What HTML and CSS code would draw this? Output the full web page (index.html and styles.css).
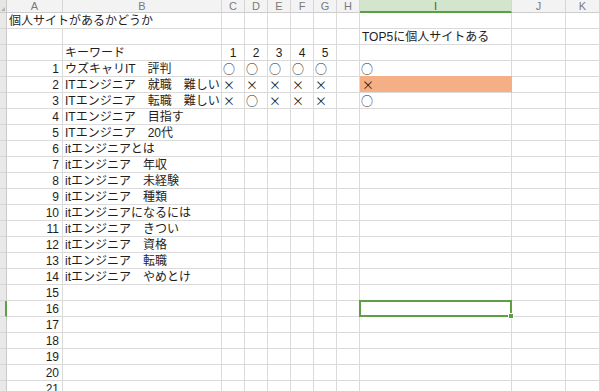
FILE: index.html
```html
<!DOCTYPE html>
<html lang="ja">
  <head>
    <meta charset="UTF-8">
    <meta name="viewport" content="width=device-width, initial-scale=1.0">
    <title>個人サイトがあるかどうか</title>
    <link rel="stylesheet" href="styles.css">
  </head>
  <body>
    <div class="sheet">
      <!-- column headers -->
      <div class="corner"></div>
      <div class="col">A</div><div class="col">B</div><div class="col">C</div><div class="col">D</div><div class="col">E</div><div class="col">F</div><div class="col">G</div><div class="col">H</div><div class="col sel">I</div><div class="col">J</div><div class="col">K</div>

      <!-- row 1 -->
      <div class="rh"></div>
      <div class="title">個人サイトがあるかどうか</div>
      <div></div><div></div><div></div><div></div><div></div><div></div><div></div><div></div><div></div>

      <!-- row 2 -->
      <div class="rh"></div>
      <div></div><div></div>
      <div></div><div></div><div></div><div></div><div></div><div></div>
      <div>TOP5に個人サイトある</div><div></div><div></div>

      <!-- row 3 -->
      <div class="rh"></div>
      <div></div><div>キーワード</div>
      <div class="ctr">1</div><div class="ctr">2</div><div class="ctr">3</div><div class="ctr">4</div><div class="ctr">5</div><div></div>
      <div></div><div></div><div></div>

      <div class="rh"></div>
      <div class="num">1</div><div>ウズキャリIT　評判</div>
      <div class="mark">○</div><div class="mark">○</div><div class="mark">○</div><div class="mark">○</div><div class="mark">○</div><div></div>
      <div class="mark">○</div><div></div><div></div>

      <div class="rh"></div>
      <div class="num">2</div><div>ITエンジニア　就職　難しい</div>
      <div class="mark">×</div><div class="mark">×</div><div class="mark">×</div><div class="mark">×</div><div class="mark">×</div><div></div>
      <div class="mark hl">×</div><div></div><div></div>

      <div class="rh"></div>
      <div class="num">3</div><div>ITエンジニア　転職　難しい</div>
      <div class="mark">×</div><div class="mark">○</div><div class="mark">×</div><div class="mark">×</div><div class="mark">×</div><div></div>
      <div class="mark">○</div><div></div><div></div>

      <div class="rh"></div>
      <div class="num">4</div><div>ITエンジニア　目指す</div>
      <div></div><div></div><div></div><div></div><div></div><div></div><div></div><div></div><div></div>

      <div class="rh"></div>
      <div class="num">5</div><div>ITエンジニア　20代</div>
      <div></div><div></div><div></div><div></div><div></div><div></div><div></div><div></div><div></div>

      <div class="rh"></div>
      <div class="num">6</div><div>itエンジニアとは</div>
      <div></div><div></div><div></div><div></div><div></div><div></div><div></div><div></div><div></div>

      <div class="rh"></div>
      <div class="num">7</div><div>itエンジニア　年収</div>
      <div></div><div></div><div></div><div></div><div></div><div></div><div></div><div></div><div></div>

      <div class="rh"></div>
      <div class="num">8</div><div>itエンジニア　未経験</div>
      <div></div><div></div><div></div><div></div><div></div><div></div><div></div><div></div><div></div>

      <div class="rh"></div>
      <div class="num">9</div><div>itエンジニア　種類</div>
      <div></div><div></div><div></div><div></div><div></div><div></div><div></div><div></div><div></div>

      <div class="rh"></div>
      <div class="num">10</div><div>itエンジニアになるには</div>
      <div></div><div></div><div></div><div></div><div></div><div></div><div></div><div></div><div></div>

      <div class="rh"></div>
      <div class="num">11</div><div>itエンジニア　きつい</div>
      <div></div><div></div><div></div><div></div><div></div><div></div><div></div><div></div><div></div>

      <div class="rh"></div>
      <div class="num">12</div><div>itエンジニア　資格</div>
      <div></div><div></div><div></div><div></div><div></div><div></div><div></div><div></div><div></div>

      <div class="rh"></div>
      <div class="num">13</div><div>itエンジニア　転職</div>
      <div></div><div></div><div></div><div></div><div></div><div></div><div></div><div></div><div></div>

      <div class="rh"></div>
      <div class="num">14</div><div>itエンジニア　やめとけ</div>
      <div></div><div></div><div></div><div></div><div></div><div></div><div></div><div></div><div></div>

      <div class="rh"></div>
      <div class="num">15</div><div></div>
      <div></div><div></div><div></div><div></div><div></div><div></div><div></div><div></div><div></div>

      <div class="rh sel"></div>
      <div class="num">16</div><div></div>
      <div></div><div></div><div></div><div></div><div></div><div></div><div class="active"></div><div></div><div></div>

      <div class="rh"></div>
      <div class="num">17</div><div></div>
      <div></div><div></div><div></div><div></div><div></div><div></div><div></div><div></div><div></div>

      <div class="rh"></div>
      <div class="num">18</div><div></div>
      <div></div><div></div><div></div><div></div><div></div><div></div><div></div><div></div><div></div>

      <div class="rh"></div>
      <div class="num">19</div><div></div>
      <div></div><div></div><div></div><div></div><div></div><div></div><div></div><div></div><div></div>

      <div class="rh"></div>
      <div class="num">20</div><div></div>
      <div></div><div></div><div></div><div></div><div></div><div></div><div></div><div></div><div></div>

      <div class="rh"></div>
      <div class="num">21</div><div></div>
      <div></div><div></div><div></div><div></div><div></div><div></div><div></div><div></div><div></div>
    </div>
  </body>
</html>
```

FILE: styles.css
```css
body {
  margin: 0;
  background-color: #fff;
  font-family: "Liberation Sans", "Noto Sans CJK JP", sans-serif;
  font-size: 12px;
  color: #1e1e1e;
  overflow: hidden;
}

.sheet {
  display: grid;
  grid-template-columns: 7px 56px 159px repeat(6, 23px) 152px 54px 1fr;
  grid-template-rows: 13px;
  grid-auto-rows: 16px;
  height: 391px;
  overflow: hidden;
}

.sheet > div {
  display: flex;
  align-items: flex-end;
  min-width: 0;
  box-sizing: border-box;
  padding: 0 2px;
  line-height: 14px;
  white-space: nowrap;
  border-right: 1px solid #dadada;
  border-bottom: 1px solid #dadada;
}

/* header strip */
.sheet > .corner {
  position: relative;
  padding: 0;
  background-color: #e6e6e6;
  border-color: #c9c9c9;
}

.corner::after {
  content: "";
  position: absolute;
  right: 1px;
  bottom: 1px;
  border-left: 4px solid transparent;
  border-bottom: 4px solid #b5b5b5;
}

.sheet > .col {
  justify-content: center;
  align-items: center;
  line-height: 12px;
  font-size: 11px;
  color: #7a7a7a;
  background-color: #f3f3f3;
  border-right-color: #d6d6d6;
  border-bottom-color: #cdcdcd;
}

.sheet > .col.sel {
  color: #2f6e27;
  background-color: #d3e5cc;
  border-bottom: 2px solid #5e9e45;
}

.sheet > .rh {
  padding: 0;
  background-color: #e9e9e9;
  border-right-color: #c9c9c9;
  border-bottom-color: #d6d6d6;
}

.sheet > .rh.sel {
  border-right: 2px solid #5e9e45;
}

/* cells */
.sheet > .title {
  grid-column: span 2;
}

.sheet > .num {
  justify-content: flex-end;
  padding-right: 3px;
}

.sheet > .ctr {
  justify-content: center;
}

.sheet > .mark {
  padding-left: 1px;
  font-family: "Noto Sans CJK JP", sans-serif;
  font-feature-settings: "fwid";
}

.sheet > .hl {
  padding-left: 2px;
  background-color: #f4b084;
  border-right-color: #f4b084;
  box-shadow: 0 -1px 0 #f4b084;
}

.sheet > .active {
  position: relative;
}

.active::after {
  content: "";
  position: absolute;
  left: -1px;
  top: -1px;
  right: -1px;
  bottom: -1px;
  border: 2px solid #5e9e45;
}

.active::before {
  content: "";
  position: absolute;
  right: -3px;
  bottom: -3px;
  width: 4px;
  height: 4px;
  background-color: #5e9e45;
  border: 1px solid #fff;
  z-index: 1;
}
```
